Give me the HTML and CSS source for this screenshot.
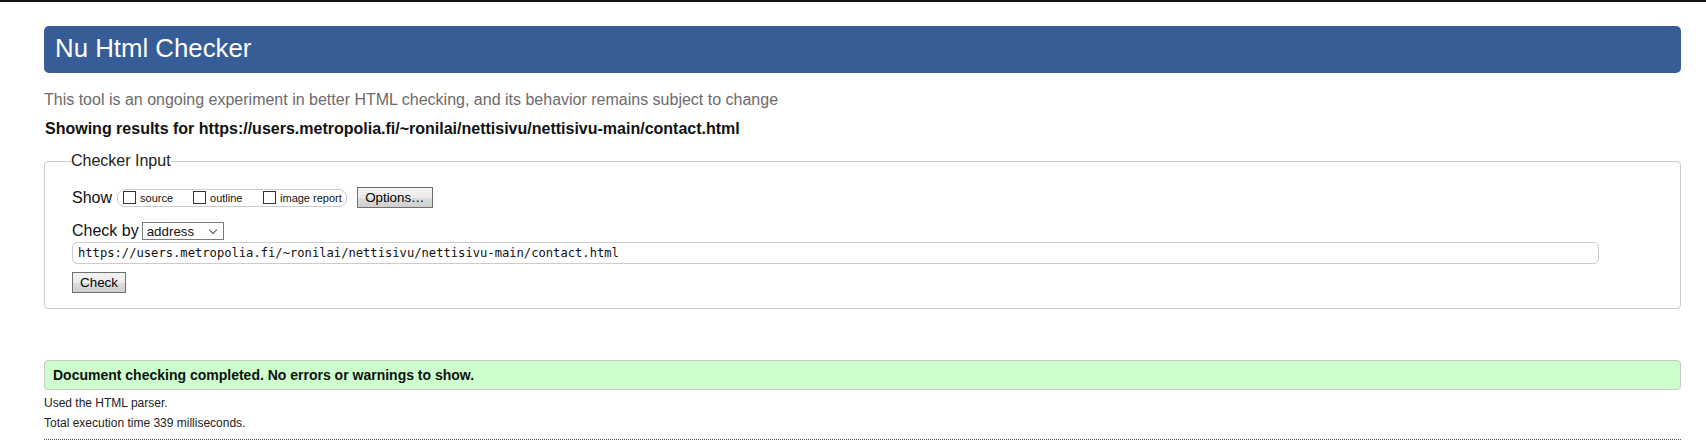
FILE: index.html
```html
<!DOCTYPE html>
<html lang="en">
<head>
<meta charset="utf-8">
<title>Nu Html Checker</title>
<link rel="stylesheet" href="styles.css">
</head>
<body>
<div class="topbar"></div>
<div class="page">
  <h1 class="title">Nu Html Checker</h1>
  <p class="intro">This tool is an ongoing experiment in better HTML checking, and its behavior remains subject to change</p>
  <p class="results-for">Showing results for https://users.metropolia.fi/~ronilai/nettisivu/nettisivu-main/contact.html</p>
  <form class="checker-form">
    <fieldset class="checker-input">
      <legend class="checker-legend">Checker Input</legend>
      <div class="row show-row">
        <span class="row-label">Show</span>
        <span class="show-group">
          <label class="show-item"><input type="checkbox" class="box">source</label>
          <label class="show-item"><input type="checkbox" class="box">outline</label>
          <label class="show-item last"><input type="checkbox" class="box">image report</label>
        </span>
        <button type="button" class="btn options-btn">Options…</button>
      </div>
      <div class="row checkby-row">
        <span class="row-label">Check by</span>
        <span class="select-wrap">
          <select class="select"><option>address</option></select>
        </span>
      </div>
      <div class="row url-row">
        <input type="text" class="url" value="https://users.metropolia.fi/~ronilai/nettisivu/nettisivu-main/contact.html">
      </div>
      <div class="row submit-row">
        <button type="button" class="btn check-btn">Check</button>
      </div>
    </fieldset>
  </form>
  <p class="success">Document checking completed. No errors or warnings to show.</p>
  <p class="meta">Used the HTML parser.</p>
  <p class="meta">Total execution time 339 milliseconds.</p>
  <hr class="dotted">
</div>
</body>
</html>
```
FILE: styles.css
```css
html, body {
  margin: 0;
  padding: 0;
  background: #fff;
}
body {
  font-family: "Liberation Sans", Arial, sans-serif;
  color: #111;
}
.topbar {
  height: 2px;
  background: #111317;
}
.page {
  padding: 0 25px 0 44px;
}
.title {
  margin: 24px 0 0;
  height: 29px;
  padding: 8px 10px 10px 11px;
  background: #365d95;
  color: #fff;
  font-weight: normal;
  font-size: 25.8px;
  line-height: 29px;
  border-radius: 5px;
}
.intro {
  margin: 17px 0 0;
  font-size: 16px;
  line-height: 20px;
  color: #6b6b6b;
}
.results-for {
  margin: 10px 0 0 1px;
  font-size: 16px;
  line-height: 18px;
  font-weight: bold;
  color: #111;
}
.checker-form {
  margin: 14px 0 0;
}
.checker-input {
  margin: 0;
  padding: 17px 26px 15px 27px;
  border: 1px solid #cccccc;
  border-radius: 4px;
}
.checker-legend {
  padding: 0;
  margin-left: -1px;
  font-size: 16px;
  line-height: 18px;
  color: #222;
}
.row {
  display: flex;
  align-items: center;
}
.row-label {
  font-size: 16px;
  color: #111;
}
.show-row {
  height: 21px;
}
.show-group {
  display: inline-flex;
  align-items: center;
  height: 16px;
  margin-left: 5px;
  padding: 0 4px 0 5px;
  border: 1px solid #cccccc;
  border-radius: 8px;
}
.show-item {
  display: inline-flex;
  align-items: center;
  min-width: 70px;
  font-size: 11px;
  color: #111;
}
.show-item.last {
  min-width: 0;
}
.box {
  appearance: none;
  -webkit-appearance: none;
  width: 13px;
  height: 13px;
  margin: 0 4px 0 0;
  border: 1px solid #333;
  background: #fff;
}
.btn {
  font-family: "Liberation Sans", Arial, sans-serif;
  font-size: 13.33px;
  color: #000;
  height: 21px;
  padding: 0 6px;
  border: 1px solid #707070;
  border-radius: 0;
  background: linear-gradient(#f2f2f2 0%, #ebebeb 50%, #dddddd 51%, #cfcfcf 100%);
}
.options-btn {
  margin-left: 10px;
  width: 76px;
}
.checkby-row {
  margin-top: 12px;
  height: 21px;
}
.select-wrap {
  position: relative;
  display: inline-block;
  margin-left: 3px;
  height: 18px;
}
.select {
  appearance: none;
  -webkit-appearance: none;
  width: 82px;
  height: 18px;
  margin: 0;
  padding: 0 0 0 4px;
  border: 1px solid #7a7a7a;
  border-radius: 0;
  background: #fff;
  font-family: "Liberation Sans", Arial, sans-serif;
  font-size: 13.33px;
  color: #111;
}
.select-wrap::after {
  content: "";
  position: absolute;
  right: 8px;
  top: 5px;
  width: 5px;
  height: 5px;
  border-right: 1px solid #555;
  border-bottom: 1px solid #555;
  transform: rotate(45deg);
  pointer-events: none;
}
.url-row {
  margin-top: 1px;
}
.url {
  width: 1527px;
  height: 22px;
  box-sizing: border-box;
  margin: 0;
  padding: 0 5px;
  border: 1px solid #cccccc;
  border-radius: 5px;
  font-family: "DejaVu Sans Mono", monospace;
  font-size: 12.15px;
  color: #111;
}
.submit-row {
  margin-top: 8px;
}
.check-btn {
  width: 54px;
}
.success {
  margin: 51px 0 0;
  padding: 6px 8px;
  font-size: 14px;
  line-height: 16px;
  font-weight: bold;
  background: #ccffcc;
  border: 1px solid #c8c8c8;
  border-radius: 4px;
  color: #111;
}
.meta {
  margin: 3px 0 0;
  font-size: 12px;
  line-height: 20px;
  color: #222;
}
.meta + .meta {
  margin-top: 0;
}
.dotted {
  margin: 6px 0 0;
  height: 0;
  border: 0;
  border-top: 1px dotted #555;
}
```
